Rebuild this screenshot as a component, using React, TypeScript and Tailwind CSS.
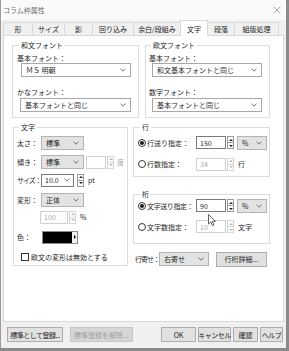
import React from "react";

function Chevron({ color = "#555" }: { color?: string }) {
  return (
    <svg width="6" height="4" viewBox="0 0 6 4" className="shrink-0">
      <path d="M0.6 0.6 L3 3.2 L5.4 0.6" stroke={color} fill="none" strokeWidth="0.8" />
    </svg>
  );
}

function Select({ value, className = "", white = false }: { value: string; className?: string; white?: boolean }) {
  return (
    <div
      className={`flex items-center justify-between h-[14px] pl-[4px] pr-[4px] border shrink-0 ${
        white ? "bg-white border-[#a8a8a8]" : "bg-[#e3e3e3] border-[#b4b4b4]"
      } ${className}`}
    >
      <span className="whitespace-nowrap">{value}</span>
      <Chevron />
    </div>
  );
}

function Input({ value, disabled = false, className = "" }: { value: string; disabled?: boolean; className?: string }) {
  return (
    <div
      className={`flex items-center h-[13px] pl-[3px] bg-white border shrink-0 ${
        disabled ? "border-[#cfcfcf] text-[#a8a8a8]" : "border-[#7a7a7a]"
      } ${className}`}
    >
      {value}
    </div>
  );
}

function Spin({ disabled = false }: { disabled?: boolean }) {
  const c = disabled ? "#b8b8b8" : "#222";
  return (
    <div
      className={`w-[7px] h-[13px] flex flex-col border shrink-0 bg-white ${
        disabled ? "border-[#d4d4d4]" : "border-[#9a9a9a]"
      }`}
    >
      <div className={`flex-1 flex items-center justify-center border-b ${disabled ? "border-[#d4d4d4]" : "border-[#9a9a9a]"}`}>
        <svg width="4" height="2" viewBox="0 0 4 2">
          <path d="M0 2 L2 0 L4 2 Z" fill={c} />
        </svg>
      </div>
      <div className="flex-1 flex items-center justify-center">
        <svg width="4" height="2" viewBox="0 0 4 2">
          <path d="M0 0 L2 2 L4 0 Z" fill={c} />
        </svg>
      </div>
    </div>
  );
}

function Radio({ checked = false }: { checked?: boolean }) {
  return (
    <span className="w-[8px] h-[8px] rounded-full border border-[#333] bg-white flex items-center justify-center shrink-0">
      {checked && <span className="w-[4px] h-[4px] rounded-full bg-[#1a1a1a]" />}
    </span>
  );
}

function Button({ label, disabled = false, className = "" }: { label: string; disabled?: boolean; className?: string }) {
  return (
    <div
      className={`h-[15px] flex items-center justify-center border whitespace-nowrap ${
        disabled ? "bg-[#d6d6d6] border-[#c6c6c6] text-[#a0a0a0]" : "bg-[#e1e1e1] border-[#adadad]"
      } ${className}`}
    >
      {label}
    </div>
  );
}

const tabs = [
  { label: "形", w: "w-[30px]" },
  { label: "サイズ", w: "w-[32px]" },
  { label: "影", w: "w-[28px]" },
  { label: "回り込み", w: "w-[41px]" },
  { label: "余白/段組み", w: "w-[47px]" },
  { label: "文字", w: "w-[28px]", active: true },
  { label: "段落", w: "w-[27px]" },
  { label: "組版処理", w: "w-[44px]" },
];

export default function App() {
  return (
    <div className="w-[289px] h-[351px] bg-[#8a8a8a] overflow-hidden relative text-[7px] leading-[10px] text-[#262626] [font-family:'Noto_Sans_CJK_JP','Noto_Sans',sans-serif]">
      <div className="w-[286px] h-[348px] bg-[#f0f0f0] border-l border-[#9c9c9c] flex flex-col">
        {/* title bar */}
        <div className="h-[20px] bg-[#fafafa] flex items-center justify-between pl-[2px] pr-[5px]">
          <span className="text-[#6a6a6a]">コラム枠属性</span>
          <svg width="8" height="8" viewBox="0 0 8 8">
            <path d="M0.5 0.5 L7.5 7.5 M7.5 0.5 L0.5 7.5" stroke="#888" strokeWidth="0.7" />
          </svg>
        </div>

        {/* tabs */}
        <div className="h-[15px] flex items-end pl-[2px]">
          {tabs.map((t, i) => (
            <div
              key={t.label}
              className={`${t.w} flex items-center justify-center border-t border-r border-[#d9d9d9] ${
                i === 0 ? "border-l" : ""
              } ${t.active ? "h-[16px] bg-white border-l -ml-[1px] -mb-[1px] relative z-10" : "h-[13px] bg-[#f0f0f0]"}`}
            >
              {t.label}
            </div>
          ))}
        </div>

        {/* panel */}
        <div className="ml-[2px] w-[281px] h-[287px] bg-white border border-[#d9d9d9] flex flex-col">
          {/* fonts row */}
          <div className="flex mt-[4px] pl-[8px] gap-[6px]">
            <fieldset className="w-[127px] border border-[#dcdcdc] pl-[4px] pb-[5px]">
              <legend className="ml-[2px] px-[2px]">和文フォント</legend>
              <div className="mt-[3px]">基本フォント：</div>
              <Select white value="ＭＳ 明朝" className="ml-[4px] w-[110px] mt-0" />
              <div className="mt-[10px]">かなフォント：</div>
              <Select white value="基本フォントと同じ" className="ml-[3px] w-[111px] mt-[1px]" />
            </fieldset>
            <fieldset className="w-[125px] border border-[#dcdcdc] pl-[3px] pb-[5px]">
              <legend className="ml-[2px] px-[2px]">欧文フォント</legend>
              <div className="mt-[3px]">基本フォント：</div>
              <Select white value="和文基本フォントと同じ" className="ml-[3px] w-[110px]" />
              <div className="mt-[10px]">数字フォント：</div>
              <Select white value="基本フォントと同じ" className="ml-[3px] w-[110px] mt-[1px]" />
            </fieldset>
          </div>

          {/* second row */}
          <div className="flex mt-[4px] pl-[9px]">
            <fieldset className="w-[115px] border border-[#dcdcdc] pl-[3px] pb-[1px]">
              <legend className="ml-[2px] px-[2px]">文字</legend>
              <div className="flex items-center h-[14px] mt-[4px]">
                <span className="w-[24px] whitespace-nowrap">太さ：</span>
                <Select value="標準" className="w-[43px]" />
              </div>
              <div className="flex items-center h-[14px] mt-[5px]">
                <span className="w-[24px] whitespace-nowrap">傾き：</span>
                <Select value="標準" className="w-[43px]" />
                <Input value="" disabled className="w-[20px] ml-[2px]" />
                <div className="ml-[1px]">
                  <Spin disabled />
                </div>
                <span className="ml-[3px] text-[#a8a8a8]">度</span>
              </div>
              <div className="flex items-center h-[14px] mt-[4px]">
                <span className="w-[24px] whitespace-nowrap tracking-[-1px]">サイズ：</span>
                <div className="w-[33px] h-[13px] flex items-center justify-between pl-[3px] pr-[3px] bg-white border border-[#7a7a7a]">
                  <span>10.0</span>
                  <Chevron />
                </div>
                <div className="ml-[3px]">
                  <Spin />
                </div>
                <span className="ml-[4px]">pt</span>
              </div>
              <div className="flex items-center h-[14px] mt-[6px]">
                <span className="w-[24px] whitespace-nowrap">変形：</span>
                <Select value="正体" className="w-[43px]" />
              </div>
              <div className="flex items-center h-[14px] mt-[3px] pl-[23px]">
                <Input value="100" disabled className="w-[28px]" />
                <div className="ml-[1px]">
                  <Spin disabled />
                </div>
                <span className="ml-[4px]">%</span>
              </div>
              <div className="flex items-center h-[14px] mt-[6px]">
                <span className="w-[25px] whitespace-nowrap">色：</span>
                <div className="w-[36px] h-[13px] flex border border-[#8a8a8a] bg-[#f0f0f0]">
                  <div className="flex-1 bg-black" />
                  <div className="w-[5px] flex items-center justify-center">
                    <svg width="2" height="4" viewBox="0 0 2 4">
                      <path d="M0 0 L2 2 L0 4 Z" fill="#000" />
                    </svg>
                  </div>
                </div>
              </div>
              <div className="flex items-center h-[14px] mt-[6px] pl-[4px]">
                <span className="w-[8px] h-[8px] border border-[#333] bg-white shrink-0" />
                <span className="ml-[2px] whitespace-nowrap">欧文の変形は無効とする</span>
              </div>
            </fieldset>

            <div className="w-[137px] ml-[5px] flex flex-col">
              <fieldset className="border border-[#dcdcdc] pl-[4px] pb-[5px]">
                <legend className="ml-[2px] px-[2px]">行</legend>
                <div className="flex items-center h-[13px] mt-[4px]">
                  <Radio checked />
                  <span className="ml-[1px] w-[49px] whitespace-nowrap">行送り指定：</span>
                  <Input value="150" className="w-[30px]" />
                  <div className="ml-[1px]">
                    <Spin />
                  </div>
                  <Select value="%" className="w-[30px] ml-[3px] h-[13px]" />
                </div>
                <div className="flex items-center h-[14px] mt-[8px]">
                  <Radio />
                  <span className="ml-[1px] w-[49px] whitespace-nowrap">行数指定：</span>
                  <Input value="34" disabled className="w-[30px]" />
                  <div className="ml-[1px]">
                    <Spin disabled />
                  </div>
                  <span className="ml-[4px]">行</span>
                </div>
              </fieldset>

              <fieldset className="border border-[#dcdcdc] pl-[4px] pb-[10px] mt-[12px]">
                <legend className="ml-[2px] px-[2px]">桁</legend>
                <div className="flex items-center h-[13px]">
                  <Radio checked />
                  <span className="ml-[1px] w-[49px] whitespace-nowrap tracking-[-0.4px]">文字送り指定：</span>
                  <Input value="90" className="w-[30px]" />
                  <div className="ml-[1px]">
                    <Spin />
                  </div>
                  <Select value="%" className="w-[30px] ml-[3px] h-[13px]" />
                </div>
                <div className="flex items-center h-[13px] mt-[8px]">
                  <Radio />
                  <span className="ml-[1px] w-[49px] whitespace-nowrap">文字数指定：</span>
                  <Input value="10" disabled className="w-[30px]" />
                  <div className="ml-[1px]">
                    <Spin disabled />
                  </div>
                  <span className="ml-[4px]">文字</span>
                </div>
              </fieldset>

              <div className="flex items-center h-[14px] mt-[8px] pl-[2px]">
                <span className="w-[24px] whitespace-nowrap tracking-[-1px]">行寄せ：</span>
                <Select value="右寄せ" className="w-[50px]" />
                <Button label="行桁詳細..." className="w-[51px] ml-[7px] h-[14px]" />
              </div>
            </div>
          </div>
        </div>

        {/* bottom buttons */}
        <div className="flex items-center justify-between mt-[5px] pl-[6px] pr-[3px]">
          <div className="flex gap-[7px]">
            <Button label="標準として登録..." className="w-[56px] tracking-[-0.5px]" />
            <Button label="標準登録を解除..." disabled className="w-[63px]" />
          </div>
          <div className="flex gap-[2px]">
            <Button label="OK" className="w-[35px]" />
            <Button label="キャンセル" className="w-[33px] tracking-[-0.5px]" />
            <Button label="確認" className="w-[25px]" />
            <Button label="ヘルプ" className="w-[23px] tracking-[-0.5px]" />
          </div>
        </div>
      </div>

      {/* mouse cursor */}
      <svg className="absolute left-[208px] top-[214px]" width="8" height="13" viewBox="0 0 8 13">
        <path d="M0.5 0.5 L0.5 10 L2.8 7.9 L4.4 11.6 L5.8 11 L4.3 7.4 L7.3 7.4 Z" fill="#fff" stroke="#222" strokeWidth="0.7" />
      </svg>
    </div>
  );
}
